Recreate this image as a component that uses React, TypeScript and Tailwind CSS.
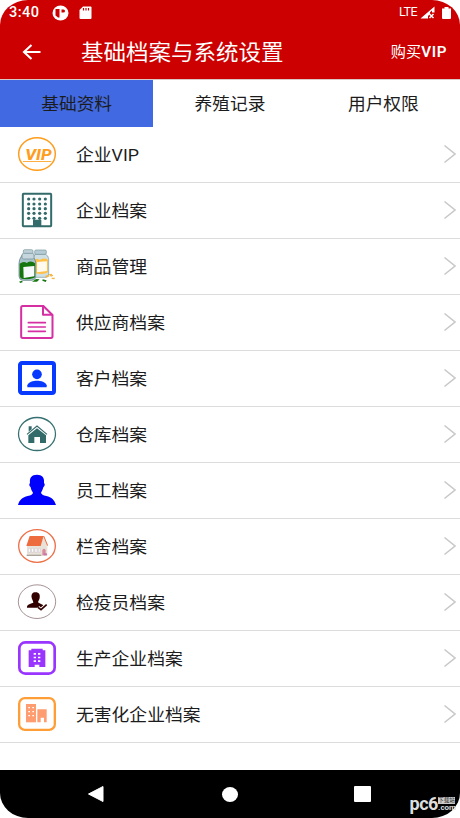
import type { ReactNode } from 'react'

interface Item {
  label: string
  icon: ReactNode
}

const TABS = ['基础资料', '养殖记录', '用户权限']

const WINDOWS = [35, 51, 68, 85].flatMap((x) => [21, 36, 50, 64, 79].map((y) => [x, y]))

const ITEMS: Item[] = [
  {
    label: '企业VIP',
    icon: (
      <>
        <ellipse cx="60" cy="54" rx="55" ry="49" fill="none" stroke="#ff9d1c" strokeWidth="4.500" />
        <text x="25" y="71" fontSize="44" fontWeight="800" fontStyle="italic" fontFamily="Roboto, sans-serif" fill="#ff9d1c" textLength="79" lengthAdjust="spacingAndGlyphs">
          VIP
        </text>
        <path d="M18 76.500H103" stroke="#ff9d1c" strokeWidth="2.500" />
      </>
    ),
  },
  {
    label: '企业档案',
    icon: (
      <>
        <rect x="17.500" y="5.500" width="85" height="97" rx="2" fill="#fff" stroke="#336b6b" strokeWidth="6" />
        {WINDOWS.map(([x, y]) => (
          <circle key={`${x}-${y}`} cx={x} cy={y} r="4.800" fill="#336b6b" />
        ))}
        <path d="M48 104V83H73V104Z" fill="#336b6b" />
      </>
    ),
  },
  {
    label: '商品管理',
    icon: (
      <>
        <path d="M54 19Q50 24 50 31V80Q50 87 58 88H87Q95 87 95 78V32Q94 23 86 19Z" fill="#cfe0e4" stroke="#7895a0" strokeWidth="2" />
        <path d="M52 36Q60 28 68 36Q82 28 93 35V73Q80 82 52 75Z" fill="#ffc04a" />
        <path d="M60 42L90 40V69L60 73Z" fill="#fffaf0" />
        <rect x="53" y="6" width="35" height="13" rx="4" fill="#b5ccd4" stroke="#7895a0" strokeWidth="2" />
        <rect x="19" y="5" width="29" height="12" rx="4" fill="#bdd0d6" stroke="#7895a0" strokeWidth="2" />
        <path d="M16 20Q6 34 6 45V85Q7 96 17 97H44Q55 96 56 88V42Q54 30 45 24Z" fill="#a9c3cb" stroke="#55747b" strokeWidth="2" />
        <path d="M8 47Q20 38 29 45Q43 36 54 46V88Q46 95 17 93Q8 91 8 82Z" fill="#15760e" />
        <path d="M19 57L52 54V85L20 90Z" fill="#f7fafa" />
        <rect x="15" y="16" width="36" height="17" rx="5" fill="#c5d7dc" stroke="#6f8b95" strokeWidth="2" />
        <path d="M6 101L14 98L18 102L10 105ZM45 101L57 93L68 94L60 101ZM77 94L89 97L86 102L76 98Z" fill="#167a10" />
        <path d="M84 84L94 80L98 85L88 89ZM95 79L103 77L109 83L102 86ZM104 89L114 89L112 94L104 93Z" fill="#f4b545" />
      </>
    ),
  },
  {
    label: '供应商档案',
    icon: (
      <g fill="none" stroke="#d62fa4" strokeWidth="6" strokeLinecap="round" strokeLinejoin="round">
        <path d="M79 6H17Q12.500 6 12.500 11V97Q12.500 102 17 102H102Q106.500 102 106.500 97V33Z" />
        <path d="M78 7V32H105" />
        <path d="M34 56H85M34 69H85M34 82H85" strokeWidth="5" />
      </g>
    ),
  },
  {
    label: '客户档案',
    icon: (
      <>
        <rect x="9" y="9" width="102" height="90" rx="6" fill="#fff" stroke="#0739ff" strokeWidth="12" />
        <circle cx="60" cy="43" r="14.500" fill="#0739ff" />
        <path d="M31 82V76C33 66 49 62 60 62S87 66 89 76V82Z" fill="#0739ff" />
      </>
    ),
  },
  {
    label: '仓库档案',
    icon: (
      <>
        <ellipse cx="60" cy="54" rx="55.500" ry="49.500" fill="none" stroke="#377070" strokeWidth="3.800" />
        <path d="M60 37L87 58V81H69V63H52V81H34V58Z" fill="#336b6b" />
        <path d="M30 55L60 30L90 55" fill="none" stroke="#336b6b" strokeWidth="3.500" />
        <path d="M35 31H44V40L35 47Z" fill="#336b6b" />
      </>
    ),
  },
  {
    label: '员工档案',
    icon: (
      <path
        d="M60 8C75 8 83 16 81 33C85 36 83 43 79 46C77 54 74 59 72 62C73 67 78 69 88 72C104 76 112 83 117 99H3C7 83 17 76 32 72C43 69 47 67 48 62C45 58 42 53 41 46C37 43 35 36 39 33C37 17 44 8 60 8Z"
        fill="#0000ff"
      />
    ),
  },
  {
    label: '栏舍档案',
    icon: (
      <>
        <ellipse cx="60" cy="54" rx="55" ry="49" fill="none" stroke="#ed7048" strokeWidth="4" />
        <path d="M30 48H72L80 27L91 49V83H30Z" fill="#e8e2d9" />
        <path d="M38 24H80L71 54H28Z" fill="#ed6b3c" />
        <path d="M80 24L92 53" stroke="#ed6b3c" strokeWidth="3" />
        <path d="M34 61H40V73H34ZM44 61H50V73H44ZM54 61H60V73H54ZM64 61H69V73H64Z" fill="#fff" stroke="#c9bcc6" strokeWidth="1.500" />
        <path d="M29 80H73V84H29Z" fill="#aaa49a" />
        <path d="M76 82V66Q81 58 86 66V82Z" fill="#d98ba0" />
        <path d="M80 76H90V82H80Z" fill="#c978a5" />
      </>
    ),
  },
  {
    label: '检疫员档案',
    icon: (
      <>
        <ellipse cx="60" cy="53" rx="56" ry="50.500" fill="none" stroke="#694a4e" strokeWidth="1.800" />
        <path d="M56 25C66 25 70 32 68 42C67 48 64 50 63 55C66 59 75 60 79 64L70 71H30C29 62 36 60 49 56C49 50 45 47 44 41C42 31 46 25 56 25Z" fill="#330000" />
        <path d="M64 69L72 77L89 62" fill="none" stroke="#fff" strokeWidth="8" />
        <path d="M63 70L72 77L89 62" fill="none" stroke="#330000" strokeWidth="5" />
      </>
    ),
  },
  {
    label: '生产企业档案',
    icon: (
      <>
        <rect x="7" y="7" width="106" height="94" rx="18" fill="#fff" stroke="#9a35ff" strokeWidth="8" />
        <path d="M35 81V31H43V26H77V31H85V81H67V74H53V81Z" fill="#9a35ff" />
        <path d="M50 39H57V44H50ZM63 39H70V44H63ZM50 50H57V55H50ZM63 50H70V55H63ZM50 61H57V66H50ZM63 61H70V66H63Z" fill="#fff" />
      </>
    ),
  },
  {
    label: '无害化企业档案',
    icon: (
      <>
        <rect x="6.500" y="6.500" width="107" height="95" rx="17" fill="#fff" stroke="#ff9e37" strokeWidth="7" />
        <path d="M27 24H57V79H27Z" fill="#ff9d70" />
        <path d="M61 40H89V79H81V65H71V79H61Z" fill="#ff9d70" />
        <path d="M34 33H39V37H34ZM46 33H51V37H46ZM34 45H39V49H34ZM46 45H51V49H46ZM34 57H39V61H34ZM46 57H51V61H46Z" fill="#fff" />
      </>
    ),
  },
]

function StatusBar() {
  return (
    <div className="flex h-[25px] items-center justify-between pl-[9px] pr-[9px] text-white">
      <div className="flex items-center">
        <span className="w-[43px] pt-[2px] text-[14.5px] font-medium leading-none tracking-[0.5px]">3:40</span>
        <svg className="mr-[10px]" width="17" height="16" viewBox="0 0 17 16">
          <ellipse cx="8.500" cy="8" rx="8" ry="7.500" fill="#fff" />
          <path d="M3.500 4H7.500V12.500H6L3.500 10.500ZM9.500 4.500H11.500Q13 4.500 13 6T11.500 7.500H9.500Z" fill="#c00" />
        </svg>
        <svg width="13" height="14" viewBox="0 0 13 14">
          <path d="M4 0.500H11.500Q12.500 0.500 12.500 1.500V12Q12.500 13 11.500 13H1.500Q0.500 13 0.500 12V4Z" fill="#fff" />
          <path d="M4.500 2V4.500M7 2V4.500M9.500 2V4.500" stroke="#c00" strokeWidth="1.200" />
        </svg>
      </div>
      <div className="flex items-center">
        <span className="mr-[3px] text-[12.5px] leading-none tracking-[-0.5px]">LTE</span>
        <svg className="mr-[7px]" width="15" height="13" viewBox="0 0 15 13">
          <path d="M0.500 12.500L14.500 0.500V6.500H12V4.500L5.500 10.500H8V12.500Z" fill="#fff" />
          <path d="M2 12L10 5V8L8 10V12Z" fill="#fff" />
          <path d="M9.500 8L13.500 12M13.500 8L9.500 12" stroke="#fff" strokeWidth="1.500" />
        </svg>
        <svg width="9" height="12" viewBox="0 0 9 12">
          <path d="M0 1.500H2.500V0H6.500V1.500H9V11Q9 12 8 12H1Q0 12 0 11Z" fill="#fff" />
        </svg>
      </div>
    </div>
  )
}

function Header() {
  return (
    <header className="h-[79px] bg-[#cc0000] text-white">
      <StatusBar />
      <div className="flex h-[54px] items-center pl-[22px] pr-[13px]">
        <svg className="mr-[40px]" width="19" height="16" viewBox="0 0 19 16">
          <path d="M18.500 8H2M9.500 1L2 8L9.500 15" fill="none" stroke="#fff" strokeWidth="2.100" />
        </svg>
        <h1 className="flex-1 scale-y-[0.94] whitespace-nowrap pt-px text-[22.5px] leading-none">基础档案与系统设置</h1>
        <button className="scale-y-[0.94] whitespace-nowrap pt-[2px] text-[15.2px] leading-none">
          购买<span className="font-semibold tracking-[0.6px]">VIP</span>
        </button>
      </div>
    </header>
  )
}

function NavBar() {
  return (
    <nav className="flex h-12 items-center bg-black pl-[87px]">
      <svg className="mr-[117px]" width="18" height="18" viewBox="0 0 18 18">
        <path d="M16 1.500V16.500L1.500 9Z" fill="#fff" stroke="#fff" strokeLinejoin="round" />
      </svg>
      <span className="mr-[116px] h-[15px] w-4 rounded-[50%] bg-white" />
      <span className="h-4 w-[17px] rounded-[1px] bg-white" />
    </nav>
  )
}

function Watermark() {
  return (
    <div className="absolute bottom-[6px] right-[4px] flex items-end text-[#ddd]">
      <span className="text-[18px] font-bold leading-[17px] tracking-[-0.4px]">pc6</span>
      <span className="flex flex-col">
        <span className="h-[7px] w-[17px] bg-[#ccc] text-center text-[5.5px] leading-[7px] text-[#222]">下载站</span>
        <span className="text-[8px] font-bold leading-[8px]">.com</span>
      </span>
    </div>
  )
}

export default function App() {
  return (
    <div className="relative h-[818px] w-[460px] bg-white font-[Roboto,'Noto_Sans_CJK_SC',sans-serif]">
      <div className="flex h-full flex-col overflow-hidden rounded-[28px/25px] bg-white text-[#1c1c1c]">
        <Header />
        <div className="grid h-12 grid-cols-3 border-t border-[#d8c8c8] text-[17.7px]">
          {TABS.map((tab, i) => (
            <button key={tab} className={`flex items-center justify-center pt-[3px] leading-none ${i === 0 ? 'bg-[#4169e1]' : 'bg-white'}`}>
              <span className="scale-y-[0.94]">{tab}</span>
            </button>
          ))}
        </div>
        <ul className="flex-1">
          {ITEMS.map((item) => (
            <li key={item.label} className="flex h-14 items-center border-b border-[#dcdcdc] pb-px pl-[17px] pr-[3px]">
              <svg className="mr-[19px]" width="40" height="36" viewBox="0 0 120 108">
                {item.icon}
              </svg>
              <span className="flex-1 scale-y-[0.94] pt-px text-[17.8px] leading-none">{item.label}</span>
              <svg width="14" height="20" viewBox="0 0 14 20">
                <path d="M1.500 1.500L12 10L1.500 18.500" fill="none" stroke="#c8c8c8" strokeWidth="1.600" />
              </svg>
            </li>
          ))}
        </ul>
        <NavBar />
      </div>
      <Watermark />
    </div>
  )
}
